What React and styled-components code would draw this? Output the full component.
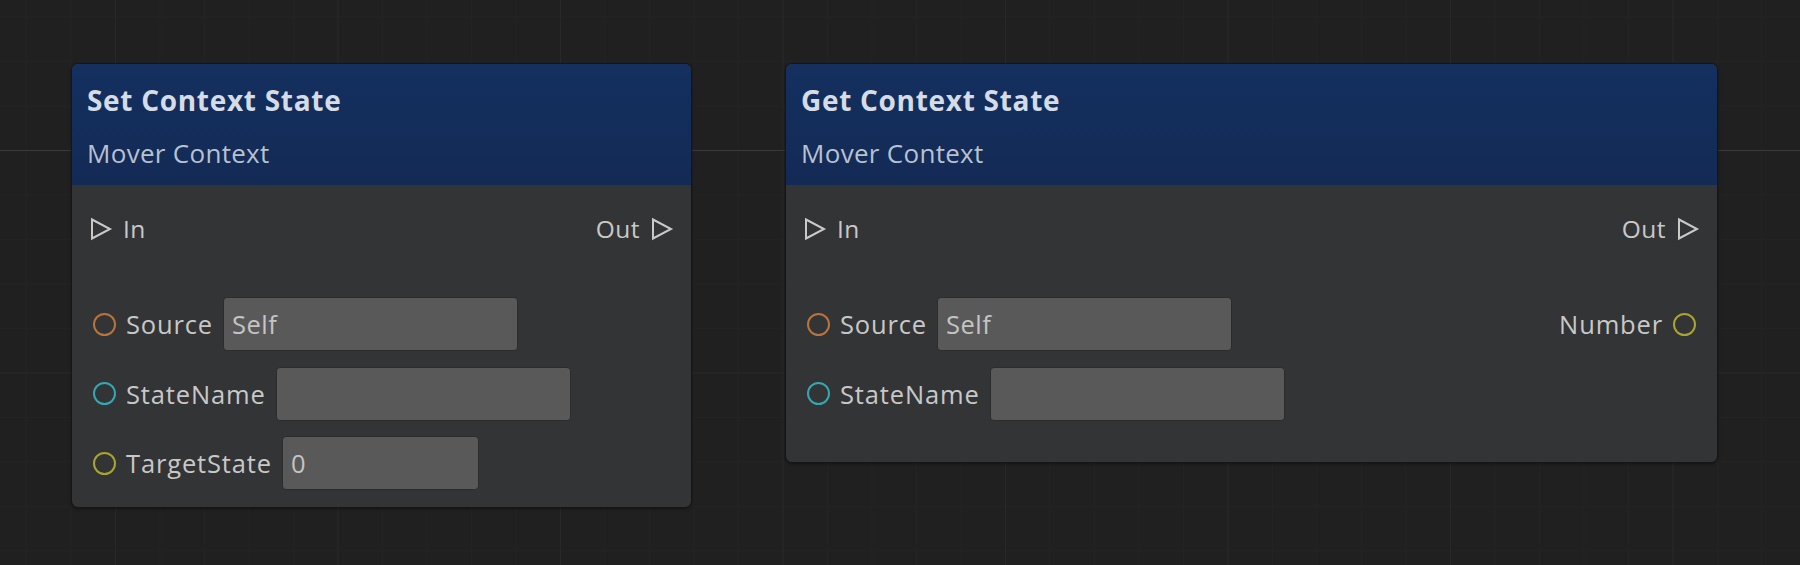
import React from "react";
import styled, { createGlobalStyle } from "styled-components";

const GlobalStyle = createGlobalStyle`
  html, body {
    margin: 0;
    padding: 0;
    background: #202020;
  }
  body {
    font-family: "Open Sans", "Noto Sans", sans-serif;
  }
`;

const nodes = [
  {
    id: "set",
    title: "Set Context State",
    subtitle: "Mover Context",
    x: 71,
    y: 63,
    width: 621,
    bottom: 17,
    inputs: [
      { name: "Source", color: "#b8743c", value: "Self", field: 295 },
      { name: "StateName", color: "#35a7b0", value: "", field: 295 },
      { name: "TargetState", color: "#a9a52e", value: "0", field: 197 },
    ],
    outputs: [],
  },
  {
    id: "get",
    title: "Get Context State",
    subtitle: "Mover Context",
    x: 785,
    y: 63,
    width: 933,
    bottom: 41,
    inputs: [
      { name: "Source", color: "#b8743c", value: "Self", field: 295 },
      { name: "StateName", color: "#35a7b0", value: "", field: 295 },
    ],
    outputs: [{ name: "Number", color: "#a9a52e" }],
  },
];

const FlowArrow = () => (
  <svg width="24" height="24" viewBox="0 0 24 24">
    <polygon
      points="3,2.5 21,12 3,21.5"
      fill="none"
      stroke="#c9c9c9"
      strokeWidth="2"
      strokeLinejoin="miter"
    />
  </svg>
);

const App = () => {
  return (
    <>
      <GlobalStyle />
      <Canvas>
        {nodes.map((node) => (
          <Node key={node.id} $x={node.x} $y={node.y} $w={node.width}>
            <Header>
              <Title>{node.title}</Title>
              <Subtitle>{node.subtitle}</Subtitle>
            </Header>
            <Body $bottom={node.bottom}>
              <FlowRow>
                <FlowPort>
                  <FlowArrow />
                  <span>In</span>
                </FlowPort>
                <FlowPort>
                  <span>Out</span>
                  <FlowArrow />
                </FlowPort>
              </FlowRow>
              <Ports>
                <PortColumn>
                  {node.inputs.map((port) => (
                    <PortRow key={port.name}>
                      <Pin $color={port.color} />
                      <PortLabel>{port.name}</PortLabel>
                      <Field $w={port.field}>{port.value}</Field>
                    </PortRow>
                  ))}
                </PortColumn>
                <PortColumn $right>
                  {node.outputs.map((port) => (
                    <PortRow key={port.name}>
                      <PortLabel>{port.name}</PortLabel>
                      <Pin $color={port.color} />
                    </PortRow>
                  ))}
                </PortColumn>
              </Ports>
            </Body>
          </Node>
        ))}
      </Canvas>
    </>
  );
};

export default App;

const Canvas = styled.div`
  position: relative;
  width: 1800px;
  height: 565px;
  overflow: hidden;
  background-color: #202020;
  background-image:
    linear-gradient(to bottom, transparent 150px, #3a3a3a 150px, #3a3a3a 151.5px, transparent 151.5px),
    linear-gradient(to right, #282828 1px, transparent 1px),
    linear-gradient(to bottom, #282828 1px, transparent 1px),
    linear-gradient(to right, #232323 1px, transparent 1px),
    linear-gradient(to bottom, #232323 1px, transparent 1px);
  background-size:
    100% 100%,
    222.5px 222.5px,
    222.5px 222.5px,
    44.5px 44.5px,
    44.5px 44.5px;
  background-position:
    0 0,
    115px 150px,
    115px 150px,
    115px 150px,
    115px 150px;
`;

const Node = styled.div`
  position: absolute;
  left: ${(p) => p.$x}px;
  top: ${(p) => p.$y}px;
  width: ${(p) => p.$w}px;
  box-sizing: border-box;
  border: 1.5px solid #161616;
  border-radius: 7px;
  background: #333436;
  overflow: hidden;
  box-shadow: 0 1px 3px rgba(0, 0, 0, 0.4);
`;

const Header = styled.div`
  display: flex;
  flex-direction: column;
  gap: 16px;
  padding: 17px 16px 14px 15px;
  background: linear-gradient(to bottom, #14305f, #132a55);
`;

const Title = styled.div`
  font-size: 28px;
  line-height: 38px;
  font-weight: 700;
  letter-spacing: 0.7px;
  color: #d6dce6;
`;

const Subtitle = styled.div`
  font-size: 26px;
  line-height: 36px;
  letter-spacing: 0.3px;
  color: #b7c1d1;
`;

const Body = styled.div`
  display: flex;
  flex-direction: column;
  padding: 24px 17px ${(p) => p.$bottom}px;
  gap: 48px;
  color: #c8c8c8;
`;

const FlowRow = styled.div`
  display: flex;
  justify-content: space-between;
  align-items: center;
  height: 40px;
`;

const FlowPort = styled.div`
  display: flex;
  align-items: center;
  gap: 10px;
  font-size: 24.5px;
  line-height: 40px;
  letter-spacing: 0.5px;
`;

const Ports = styled.div`
  display: flex;
  justify-content: space-between;
  padding: 0 4px 0 4px;
`;

const PortColumn = styled.div`
  display: flex;
  flex-direction: column;
  align-items: ${(p) => (p.$right ? "flex-end" : "flex-start")};
  gap: 15.5px;
`;

const PortRow = styled.div`
  display: flex;
  align-items: center;
  height: 54px;
`;

const Pin = styled.span`
  width: 23px;
  height: 23px;
  box-sizing: border-box;
  border: 2.5px solid ${(p) => p.$color};
  border-radius: 50%;
  flex: none;
`;

const PortLabel = styled.span`
  font-size: 25.5px;
  line-height: 36px;
  letter-spacing: 0.85px;
  margin: 0 10px;
  white-space: nowrap;
`;

const Field = styled.div`
  width: ${(p) => p.$w}px;
  height: 54px;
  box-sizing: border-box;
  padding: 0 8px;
  display: flex;
  align-items: center;
  background: #595959;
  border: 1.5px solid #2c2c2c;
  border-radius: 4px;
  font-size: 25.5px;
  letter-spacing: 0.5px;
  color: #c4c4c4;
`;
